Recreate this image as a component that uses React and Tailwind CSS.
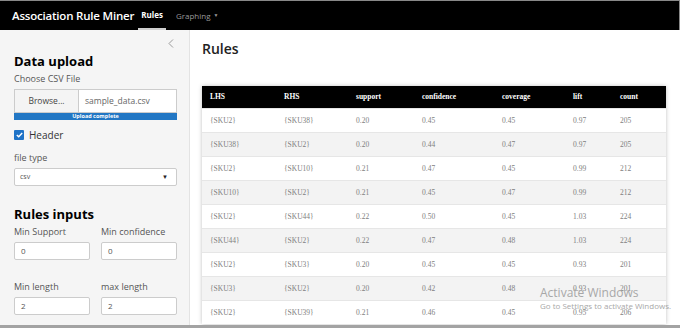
import React from 'react';

const rows = [
  ['{SKU2}', '{SKU38}', '0.20', '0.45', '0.45', '0.97', '205'],
  ['{SKU38}', '{SKU2}', '0.20', '0.44', '0.47', '0.97', '205'],
  ['{SKU2}', '{SKU10}', '0.21', '0.47', '0.45', '0.99', '212'],
  ['{SKU10}', '{SKU2}', '0.21', '0.45', '0.47', '0.99', '212'],
  ['{SKU2}', '{SKU44}', '0.22', '0.50', '0.45', '1.03', '224'],
  ['{SKU44}', '{SKU2}', '0.22', '0.47', '0.48', '1.03', '224'],
  ['{SKU2}', '{SKU3}', '0.20', '0.45', '0.45', '0.93', '201'],
  ['{SKU3}', '{SKU2}', '0.20', '0.42', '0.48', '0.93', '201'],
  ['{SKU2}', '{SKU39}', '0.21', '0.46', '0.45', '0.95', '206'],
];

const headers = ['LHS', 'RHS', 'support', 'confidence', 'coverage', 'lift', 'count'];
const cols = 'grid grid-cols-[74px_72px_66px_80px_71px_47px_1fr]';

const Label = ({ children }) => (
  <p className="text-[9px] leading-[12px] text-[#555]">{children}</p>
);

const SmallInput = ({ value }) => (
  <div className="mt-[4px] h-[18px] w-[76px] bg-white border border-[#ccc] rounded-[2px] flex items-center px-[6px] text-[8px] text-[#555]">
    {value}
  </div>
);

export default function App() {
  return (
    <div className="w-[680px] h-[328px] flex flex-col overflow-hidden relative bg-white font-['Open_Sans',sans-serif]">
      <nav className="h-[30px] shrink-0 bg-black border-t border-r border-[#888] flex items-center">
        <span className="ml-[12px] text-white text-[11.5px] font-semibold tracking-[-0.2px]">Association Rule Miner</span>
        <div className="ml-[4px] h-full px-[3px] flex items-center border-b-2 border-[#cfcfcf]">
          <span className="text-white text-[8px] font-bold">Rules</span>
        </div>
        <span className="ml-[10px] text-[#9a9a9a] text-[8px]">Graphing</span>
        <span className="ml-[3px] text-[#9a9a9a] text-[5px]">▼</span>
      </nav>

      <div className="flex flex-1 min-h-0">
        <aside className="w-[190px] shrink-0 bg-[#f5f5f5] border-r border-[#e3e3e3] px-[14px]">
          <div className="mt-[6px] h-[14px] flex justify-end items-center pr-[1px]">
            <svg width="6" height="9" viewBox="0 0 6 9" fill="none" stroke="#9a9a9a" strokeWidth="1">
              <path d="M5 0.5L1 4.5L5 8.5" />
            </svg>
          </div>
          <h2 className="mt-[3px] text-[13px] leading-[16px] font-bold text-black">Data upload</h2>
          <div className="mt-[4px]"><Label>Choose CSV File</Label></div>
          <div className="mt-[4px] w-[163px]">
            <div className="h-[24px] flex border border-[#ccc] bg-white">
              <div className="w-[64px] bg-[#f4f4f4] border-r border-[#ccc] flex items-center justify-center text-[8.5px] text-[#444]">Browse...</div>
              <div className="flex items-center pl-[6px] text-[8.5px] text-[#666]">sample_data.csv</div>
            </div>
            <div className="h-[7px] bg-[#2277c4] flex items-center justify-center text-white text-[5.5px] font-bold leading-none">Upload complete</div>
          </div>
          <div className="mt-[9px] h-[12px] flex items-center">
            <div className="w-[10px] h-[10px] bg-[#1f73c7] rounded-[1px] flex items-center justify-center">
              <svg width="7" height="6" viewBox="0 0 7 6" fill="none" stroke="white" strokeWidth="1.4">
                <path d="M0.8 3L2.7 4.8L6.2 1" />
              </svg>
            </div>
            <span className="ml-[5px] text-[10px] text-[#333]">Header</span>
          </div>
          <div className="mt-[11px]"><Label>file type</Label></div>
          <div className="mt-[4px] h-[18px] w-[163px] bg-white border border-[#ccc] rounded-[2px] flex items-center justify-between px-[5px]">
            <span className="text-[7px] text-[#555]">csv</span>
            <span className="text-[6px] text-[#222] mr-[3px]">▼</span>
          </div>
          <h2 className="mt-[20px] text-[13px] leading-[16px] font-bold text-black">Rules inputs</h2>
          <div className="mt-[4px] flex gap-[11px]">
            <div>
              <Label>Min Support</Label>
              <SmallInput value="0" />
            </div>
            <div>
              <Label>Min confidence</Label>
              <SmallInput value="0" />
            </div>
          </div>
          <div className="mt-[21px] flex gap-[11px]">
            <div>
              <Label>Min length</Label>
              <SmallInput value="2" />
            </div>
            <div>
              <Label>max length</Label>
              <SmallInput value="2" />
            </div>
          </div>
        </aside>

        <main className="flex-1 pl-[12px] pr-[12px]">
          <h1 className="mt-[10px] text-[14px] leading-[18px] font-semibold text-[#222]">Rules</h1>
          <div className="mt-[28px] w-[464px] shadow-[0_0_4px_rgba(0,0,0,0.25)] font-['Liberation_Serif',serif]">
            <div className={`${cols} h-[22px] bg-black items-center`}>
              {headers.map((h) => (
                <div key={h} className="pl-[8px] text-white text-[7.5px] font-bold">{h}</div>
              ))}
            </div>
            {rows.map((r, i) => (
              <div
                key={i}
                className={`${cols} h-[24px] items-center border-t border-[#e6e6e6] ${i % 2 === 1 ? 'bg-[#f3f3f3]' : 'bg-white'}`}
              >
                {r.map((c, j) => (
                  <div key={j} className="pl-[8px] text-[#808080] text-[7.5px]">{c}</div>
                ))}
              </div>
            ))}
          </div>
        </main>
      </div>

      <div className="h-[3px] shrink-0 bg-[#a3a3a3]" />

      <div className="absolute left-[540px] top-[285px] pointer-events-none font-['Open_Sans',sans-serif]">
        <p className="text-[12px] leading-[16px] text-[#a8a8a8]">Activate Windows</p>
        <p className="text-[8px] leading-[10px] text-[#a8a8a8]">Go to Settings to activate Windows.</p>
      </div>
    </div>
  );
}
